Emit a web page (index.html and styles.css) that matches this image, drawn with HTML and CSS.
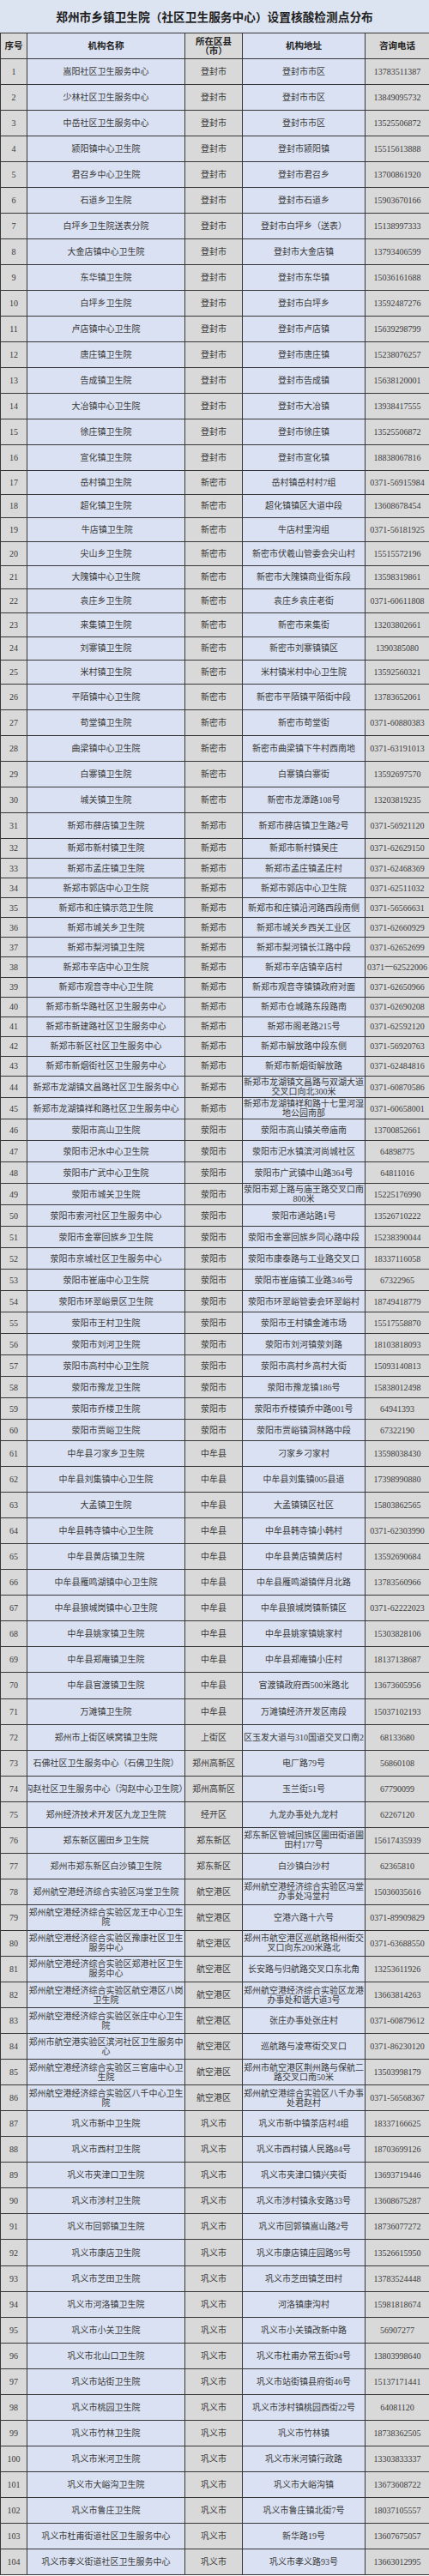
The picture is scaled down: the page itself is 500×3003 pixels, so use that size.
FILE: index.html
```html
<!DOCTYPE html>
<html lang="zh-CN">
<head>
<meta charset="utf-8">
<title>郑州市乡镇卫生院（社区卫生服务中心）设置核酸检测点分布</title>
<link rel="stylesheet" href="styles.css">
</head>
<body>
<div class="title">郑州市乡镇卫生院（社区卫生服务中心）设置核酸检测点分布</div>
<table class="sheet">
<colgroup><col class="w1"><col class="w2"><col class="w3"><col class="w4"><col class="w5"></colgroup>
<thead>
<tr class="hd"><th>序号</th><th>机构名称</th><th>所在区县<br>（市）</th><th>机构地址</th><th>咨询电话</th></tr>
</thead>
<tbody>
<tr class="a"><td>1</td><td>嵩阳社区卫生服务中心</td><td>登封市</td><td>登封市市区</td><td>13783511387</td></tr>
<tr class="a"><td>2</td><td>少林社区卫生服务中心</td><td>登封市</td><td>登封市市区</td><td>13849095732</td></tr>
<tr class="a"><td>3</td><td>中岳社区卫生服务中心</td><td>登封市</td><td>登封市市区</td><td>13525506872</td></tr>
<tr class="a"><td>4</td><td>颍阳镇中心卫生院</td><td>登封市</td><td>登封市颍阳镇</td><td>15515613888</td></tr>
<tr class="a"><td>5</td><td>君召乡中心卫生院</td><td>登封市</td><td>登封市君召乡</td><td>13700861920</td></tr>
<tr class="a"><td>6</td><td>石道乡卫生院</td><td>登封市</td><td>登封市石道乡</td><td>15903670166</td></tr>
<tr class="a"><td>7</td><td>白坪乡卫生院送表分院</td><td>登封市</td><td>登封市白坪乡（送表）</td><td>15138997333</td></tr>
<tr class="a"><td>8</td><td>大金店镇中心卫生院</td><td>登封市</td><td>登封市大金店镇</td><td>13793406599</td></tr>
<tr class="a"><td>9</td><td>东华镇卫生院</td><td>登封市</td><td>登封市东华镇</td><td>15036161688</td></tr>
<tr class="a"><td>10</td><td>白坪乡卫生院</td><td>登封市</td><td>登封市白坪乡</td><td>13592487276</td></tr>
<tr class="a"><td>11</td><td>卢店镇中心卫生院</td><td>登封市</td><td>登封市卢店镇</td><td>15639298799</td></tr>
<tr class="a"><td>12</td><td>唐庄镇卫生院</td><td>登封市</td><td>登封市唐庄镇</td><td>15238076257</td></tr>
<tr class="a"><td>13</td><td>告成镇卫生院</td><td>登封市</td><td>登封市告成镇</td><td>15638120001</td></tr>
<tr class="a"><td>14</td><td>大冶镇中心卫生院</td><td>登封市</td><td>登封市大冶镇</td><td>13938417555</td></tr>
<tr class="a"><td>15</td><td>徐庄镇卫生院</td><td>登封市</td><td>登封市徐庄镇</td><td>13525506872</td></tr>
<tr class="a"><td>16</td><td>宣化镇卫生院</td><td>登封市</td><td>登封市宣化镇</td><td>18838067816</td></tr>
<tr class="b"><td>17</td><td>岳村镇卫生院</td><td>新密市</td><td>岳村镇岳村村7组</td><td>0371-56915984</td></tr>
<tr class="b"><td>18</td><td>超化镇卫生院</td><td>新密市</td><td>超化镇镇区大道中段</td><td>13608678454</td></tr>
<tr class="b"><td>19</td><td>&nbsp;牛店镇卫生院</td><td>新密市</td><td>牛店村里沟组</td><td>0371-56181925</td></tr>
<tr class="b"><td>20</td><td>尖山乡卫生院</td><td>新密市</td><td>新密市伏羲山管委会尖山村</td><td>15515572196</td></tr>
<tr class="b"><td>21</td><td>大隗镇中心卫生院</td><td>新密市</td><td>新密市大隗镇商业街东段</td><td>13598319861</td></tr>
<tr class="b"><td>22</td><td>袁庄乡卫生院</td><td>新密市</td><td>袁庄乡袁庄老街</td><td>0371-60611808</td></tr>
<tr class="b"><td>23</td><td>来集镇卫生院</td><td>新密市</td><td>新密市来集街</td><td>13203802661</td></tr>
<tr class="b"><td>24</td><td>刘寨镇卫生院</td><td>新密市</td><td>新密市刘寨镇镇区</td><td>1390385080</td></tr>
<tr class="b"><td>25</td><td>米村镇卫生院</td><td>新密市</td><td>米村镇米村中心卫生院</td><td>13592560321</td></tr>
<tr class="a"><td>26</td><td>平陌镇中心卫生院</td><td>新密市</td><td>新密市平陌镇平陌街中段</td><td>13783652061</td></tr>
<tr class="a"><td>27</td><td>苟堂镇卫生院</td><td>新密市</td><td>新密市苟堂街</td><td>0371-60880383</td></tr>
<tr class="a"><td>28</td><td>曲梁镇中心卫生院</td><td>新密市</td><td>新密市曲梁镇下牛村西南地</td><td>0371-63191013</td></tr>
<tr class="a"><td>29</td><td>白寨镇卫生院</td><td>新密市</td><td>白寨镇白寨街</td><td>13592697570</td></tr>
<tr class="a"><td>30</td><td>城关镇卫生院</td><td>新密市</td><td>新密市龙潭路108号</td><td>13203819235</td></tr>
<tr class="a"><td>31</td><td>新郑市薛店镇卫生院</td><td>新郑市</td><td>新郑市薛店镇卫生路2号</td><td>0371-56921120</td></tr>
<tr class="c"><td>32</td><td>新郑市新村镇卫生院</td><td>新郑市</td><td>新郑市新村镇吴庄</td><td>0371-62629150</td></tr>
<tr class="c"><td>33</td><td>新郑市孟庄镇卫生院</td><td>新郑市</td><td>新郑市孟庄镇孟庄村</td><td>0371-62468369</td></tr>
<tr class="c"><td>34</td><td>新郑市郭店中心卫生院</td><td>新郑市</td><td>新郑市郭店中心卫生院</td><td>0371-62511032</td></tr>
<tr class="c"><td>35</td><td>新郑市和庄镇示范卫生院</td><td>新郑市</td><td>新郑市和庄镇沿河路西段南侧</td><td>0371-56566631</td></tr>
<tr class="c"><td>36</td><td>新郑市城关乡卫生院</td><td>新郑市</td><td>新郑市城关乡西关工业区</td><td>0371-62660929</td></tr>
<tr class="c"><td>37</td><td>新郑市梨河镇卫生院</td><td>新郑市</td><td>新郑市梨河镇长江路中段</td><td>0371-62652699</td></tr>
<tr class="c"><td>38</td><td>新郑市辛店中心卫生院</td><td>新郑市</td><td>新郑市辛店镇辛店村</td><td>0371一62522006</td></tr>
<tr class="c"><td>39</td><td>新郑市观音寺中心卫生院</td><td>新郑市</td><td>新郑市观音寺镇镇政府对面</td><td>0371-62650966</td></tr>
<tr class="c"><td>40</td><td>新郑市新华路社区卫生服务中心</td><td>新郑市</td><td>新郑市仓城路东段路南</td><td>0371-62690208</td></tr>
<tr class="c"><td>41</td><td>新郑市新建路社区卫生服务中心</td><td>新郑市</td><td>新郑市阁老路215号</td><td>0371-62592120</td></tr>
<tr class="c"><td>42</td><td>新郑市新区社区卫生服务中心</td><td>新郑市</td><td>新郑市解放路中段东侧</td><td>0371-56920763</td></tr>
<tr class="c"><td>43</td><td>新郑市新烟街社区卫生服务中心</td><td>新郑市</td><td>新郑市新烟街解放路</td><td>0371-62484816</td></tr>
<tr class="d"><td>44</td><td>新郑市龙湖镇文昌路社区卫生服务中心</td><td>新郑市</td><td>新郑市龙湖镇文昌路与双湖大道交叉口向北300米</td><td>0371-60870586</td></tr>
<tr class="d"><td>45</td><td>新郑市龙湖镇祥和路社区卫生服务中心</td><td>新郑市</td><td>新郑市龙湖镇祥和路十七里河湿地公园南部</td><td>0371-60658001</td></tr>
<tr class="d"><td>46</td><td>荥阳市高山卫生院</td><td>荥阳市</td><td>荥阳市高山镇关帝庙南</td><td>13700852661</td></tr>
<tr class="d"><td>47</td><td>荥阳市汜水中心卫生院</td><td>荥阳市</td><td>荥阳市汜水镇滨河尚城社区</td><td>64898775</td></tr>
<tr class="d"><td>48</td><td>荥阳市广武中心卫生院</td><td>荥阳市</td><td>荥阳市广武镇中山路364号</td><td>64811016</td></tr>
<tr class="d"><td>49</td><td>荥阳市城关卫生院</td><td>荥阳市</td><td>荥阳市郑上路与庙王路交叉口南800米</td><td>15225176990</td></tr>
<tr class="d"><td>50</td><td>荥阳市索河社区卫生服务中心</td><td>荥阳市</td><td>荥阳市通站路1号</td><td>13526710222</td></tr>
<tr class="d"><td>51</td><td>荥阳市金寨回族乡卫生院</td><td>荥阳市</td><td>荥阳市金寨回族乡同心路中段</td><td>15238390044</td></tr>
<tr class="d"><td>52</td><td>荥阳市京城社区卫生服务中心</td><td>荥阳市</td><td>荥阳市康泰路与工业路交叉口</td><td>18337116058</td></tr>
<tr class="d"><td>53</td><td>荥阳市崔庙中心卫生院</td><td>荥阳市</td><td>荥阳市崔庙镇工业路346号</td><td>67322965</td></tr>
<tr class="d"><td>54</td><td>荥阳市环翠峪景区卫生院</td><td>荥阳市</td><td>荥阳市环翠峪管委会环翠峪村</td><td>18749418779</td></tr>
<tr class="d"><td>55</td><td>荥阳市王村卫生院</td><td>荥阳市</td><td>荥阳市王村镇金滩市场</td><td>15517558870</td></tr>
<tr class="d"><td>56</td><td>荥阳市刘河卫生院</td><td>荥阳市</td><td>荥阳市刘河镇荥刘路</td><td>18103818093</td></tr>
<tr class="d"><td>57</td><td>荥阳市高村中心卫生院</td><td>荥阳市</td><td>荥阳市高村乡高村大街</td><td>15093140813</td></tr>
<tr class="d"><td>58</td><td>荥阳市豫龙卫生院</td><td>荥阳市</td><td>荥阳市豫龙镇186号</td><td>15838012498</td></tr>
<tr class="d"><td>59</td><td>荥阳市乔楼卫生院</td><td>荥阳市</td><td>荥阳市乔楼镇乔中路001号</td><td>64941393</td></tr>
<tr class="d"><td>60</td><td>荥阳市贾峪卫生院</td><td>荥阳市</td><td>荥阳市贾峪镇洞林路中段</td><td>67322190</td></tr>
<tr class="e"><td>61</td><td>中牟县刁家乡卫生院</td><td>中牟县</td><td>刁家乡刁家村</td><td>13598038430</td></tr>
<tr class="e"><td>62</td><td>中牟县刘集镇中心卫生院</td><td>中牟县</td><td>中牟县刘集镇005县道</td><td>17398990880</td></tr>
<tr class="e"><td>63</td><td>大孟镇卫生院</td><td>中牟县</td><td>大孟镇镇区社区</td><td>15803862565</td></tr>
<tr class="e"><td>64</td><td>中牟县韩寺镇中心卫生院</td><td>中牟县</td><td>中牟县韩寺镇小韩村</td><td>0371-62303990</td></tr>
<tr class="e"><td>65</td><td>中牟县黄店镇卫生院</td><td>中牟县</td><td>中牟县黄店镇黄店村</td><td>13592690684</td></tr>
<tr class="e"><td>66</td><td>中牟县雁鸣湖镇中心卫生院</td><td>中牟县</td><td>中牟县雁鸣湖镇伴月北路</td><td>13783560966</td></tr>
<tr class="e"><td>67</td><td>中牟县狼城岗镇中心卫生院</td><td>中牟县</td><td>中牟县狼城岗镇新镇区</td><td>0371-62222023</td></tr>
<tr class="e"><td>68</td><td>中牟县姚家镇卫生院</td><td>中牟县</td><td>中牟县姚家镇姚家村</td><td>15303828106</td></tr>
<tr class="e"><td>69</td><td>中牟县郑庵镇卫生院</td><td>中牟县</td><td>中牟县郑庵镇小庄村</td><td>18137138687</td></tr>
<tr class="e"><td>70</td><td>中牟县官渡镇卫生院</td><td>中牟县</td><td>官渡镇政府西500米路北</td><td>13673605956</td></tr>
<tr class="e"><td>71</td><td>万滩镇卫生院</td><td>中牟县</td><td>万滩镇经济开发区南段</td><td>15037102193</td></tr>
<tr class="e"><td>72</td><td>郑州市上街区峡窝镇卫生院</td><td>上街区</td><td><div class="clip"><span>上街区玉发大道与310国道交叉口南200米</span></div></td><td>68133680</td></tr>
<tr class="e"><td>73</td><td>石佛社区卫生服务中心（石佛卫生院）</td><td>郑州高新区</td><td>电厂路79号</td><td>56860108</td></tr>
<tr class="e"><td>74</td><td><div class="clip"><span>沟赵社区卫生服务中心（沟赵中心卫生院）</span></div></td><td>郑州高新区</td><td>玉兰街51号</td><td>67790099</td></tr>
<tr class="e"><td>75</td><td>郑州经济技术开发区九龙卫生院</td><td>经开区</td><td>九龙办事处九龙村</td><td>62267120</td></tr>
<tr class="e"><td>76</td><td>郑东新区圃田乡卫生院</td><td>郑东新区</td><td>郑东新区管城回族区圃田街道圃田村177号</td><td>15617435939</td></tr>
<tr class="e"><td>77</td><td>郑州市郑东新区白沙镇卫生院</td><td>郑东新区</td><td>白沙镇白沙村</td><td>62365810</td></tr>
<tr class="e"><td>78</td><td>郑州航空港经济综合实验区冯堂卫生院</td><td>航空港区</td><td>郑州航空港经济综合实验区冯堂办事处冯堂村</td><td>15036035616</td></tr>
<tr class="e"><td>79</td><td>郑州航空港经济综合实验区龙王中心卫生院</td><td>航空港区</td><td>空港六路十六号</td><td>0371-89909829</td></tr>
<tr class="e"><td>80</td><td>郑州航空港经济综合实验区豫康社区卫生服务中心</td><td>航空港区</td><td>郑州市航空港区巡航路相州街交叉口向东200米路北</td><td>0371-63688550</td></tr>
<tr class="e"><td>81</td><td>郑州航空港经济综合实验区郑港社区卫生服务中心</td><td>航空港区</td><td>长安路与归航路交叉口东北角</td><td>13253611926</td></tr>
<tr class="e"><td>82</td><td>郑州航空港经济综合实验区航空港区八岗卫生院</td><td>航空港区</td><td>郑州航空港经济综合实验区龙港办事处和谐大道3号</td><td>13663814263</td></tr>
<tr class="e"><td>83</td><td>郑州航空港经济综合实验区张庄中心卫生院</td><td>航空港区</td><td>张庄办事处张庄村</td><td>0371-60879612</td></tr>
<tr class="e"><td>84</td><td>郑州市航空港实验区滨河社区卫生服务中心</td><td>航空港区</td><td>巡航路与凌寒街交叉口</td><td>0371-86230120</td></tr>
<tr class="e"><td>85</td><td>郑州航空港经济综合实验区三官庙中心卫生院</td><td>航空港区</td><td>郑州市航空港区荆州路与保航二路交叉口南50米</td><td>13503998179</td></tr>
<tr class="e"><td>86</td><td>郑州航空港经济综合实验区八千中心卫生院</td><td>航空港区</td><td>郑州航空港综合实验区八千办事处君赵村</td><td>0371-56568367</td></tr>
<tr class="e"><td>87</td><td>巩义市新中卫生院</td><td>巩义市</td><td>巩义市新中镇茶店村4组</td><td>18337166625</td></tr>
<tr class="e"><td>88</td><td>巩义市西村卫生院</td><td>巩义市</td><td>巩义市西村镇人民路84号</td><td>18703699126</td></tr>
<tr class="e"><td>89</td><td>巩义市夹津口卫生院</td><td>巩义市</td><td>巩义市夹津口镇兴夹街</td><td>13693719446</td></tr>
<tr class="e"><td>90</td><td>巩义市涉村卫生院</td><td>巩义市</td><td>巩义市涉村镇永安路33号</td><td>13608675287</td></tr>
<tr class="e"><td>91</td><td>巩义市回郭镇卫生院</td><td>巩义市</td><td>巩义市回郭镇嵩山路2号</td><td>18736077272</td></tr>
<tr class="e"><td>92</td><td>巩义市康店卫生院</td><td>巩义市</td><td>巩义市康店镇庄园路95号</td><td>13526615950</td></tr>
<tr class="e"><td>93</td><td>巩义市芝田卫生院</td><td>巩义市</td><td>巩义市芝田镇芝田村</td><td>13783524448</td></tr>
<tr class="e"><td>94</td><td>巩义市河洛镇卫生院</td><td>巩义市</td><td>河洛镇康沟村</td><td>15981818674</td></tr>
<tr class="e"><td>95</td><td>巩义市小关卫生院</td><td>巩义市</td><td>巩义市小关镇改新中路</td><td>56907277</td></tr>
<tr class="e"><td>96</td><td>巩义市北山口卫生院</td><td>巩义市</td><td>巩义市杜甫办常五街94号</td><td>13803998640</td></tr>
<tr class="e"><td>97</td><td>巩义市站街卫生院</td><td>巩义市</td><td>巩义市站街镇县府街46号</td><td>15137171441</td></tr>
<tr class="e"><td>98</td><td>巩义市桃园卫生院</td><td>巩义市</td><td>巩义市涉村镇桃园西街22号</td><td>64081120</td></tr>
<tr class="e"><td>99</td><td>巩义市竹林卫生院</td><td>巩义市</td><td>巩义市竹林镇</td><td>18738362505</td></tr>
<tr class="e"><td>100</td><td>巩义市米河卫生院</td><td>巩义市</td><td>巩义市米河镇行政路</td><td>13303833337</td></tr>
<tr class="e"><td>101</td><td>巩义市大峪沟卫生院</td><td>巩义市</td><td>巩义市大峪沟镇</td><td>13673608722</td></tr>
<tr class="e"><td>102</td><td>巩义市鲁庄卫生院</td><td>巩义市</td><td>巩义市鲁庄镇北街7号</td><td>18037105557</td></tr>
<tr class="e"><td>103</td><td>巩义市杜甫街道社区卫生服务中心</td><td>巩义市</td><td>新华路19号</td><td>13607675057</td></tr>
<tr class="e"><td>104</td><td>巩义市孝义街道社区卫生服务中心</td><td>巩义市</td><td>巩义市孝义路93号</td><td>13663012995</td></tr>
</tbody>
</table>
</body>
</html>
```

FILE: styles.css
```css
html, body {
  margin: 0;
  padding: 0;
}

body {
  width: 500px;
  background: #ffffff;
  font-family: "Liberation Serif", "Noto Sans CJK SC", serif;
  color: #3a3a3a;
}

.title {
  height: 38px;
  display: flex;
  align-items: center;
  justify-content: center;
  background: #dde4f1;
  font-family: "Noto Sans CJK SC", sans-serif;
  font-weight: 700;
  font-size: 13.7px;
  color: #1e1e1e;
  white-space: nowrap;
}

.sheet {
  width: 500px;
  border-collapse: collapse;
  table-layout: fixed;
}

.w1 { width: 31px; }
.w2 { width: 184px; }
.w3 { width: 67px; }
.w4 { width: 143px; }
.w5 { width: 75px; }

.sheet th,
.sheet td {
  border: 1px solid #363636;
  padding: 0 1px;
  text-align: center;
  vertical-align: middle;
  overflow: hidden;
  font-size: 10px;
  line-height: 11px;
}

.sheet td:nth-child(odd),
.sheet th:nth-child(odd) {
  background: #d9d9d9;
}

.sheet td:nth-child(even),
.sheet th:nth-child(even) {
  background: #d9e1f2;
}

.sheet th {
  font-weight: 700;
  font-size: 10.5px;
  color: #222222;
}

.hd th { height: 29px; }
.a td { height: 29px; }
.b td { height: 26.67px; }
.c td { height: 22.1px; }
.d td { height: 24px; }
.e td { height: 29.05px; }

.clip {
  display: flex;
  justify-content: center;
  white-space: nowrap;
  overflow: hidden;
}

.clip span {
  flex: none;
}
```
